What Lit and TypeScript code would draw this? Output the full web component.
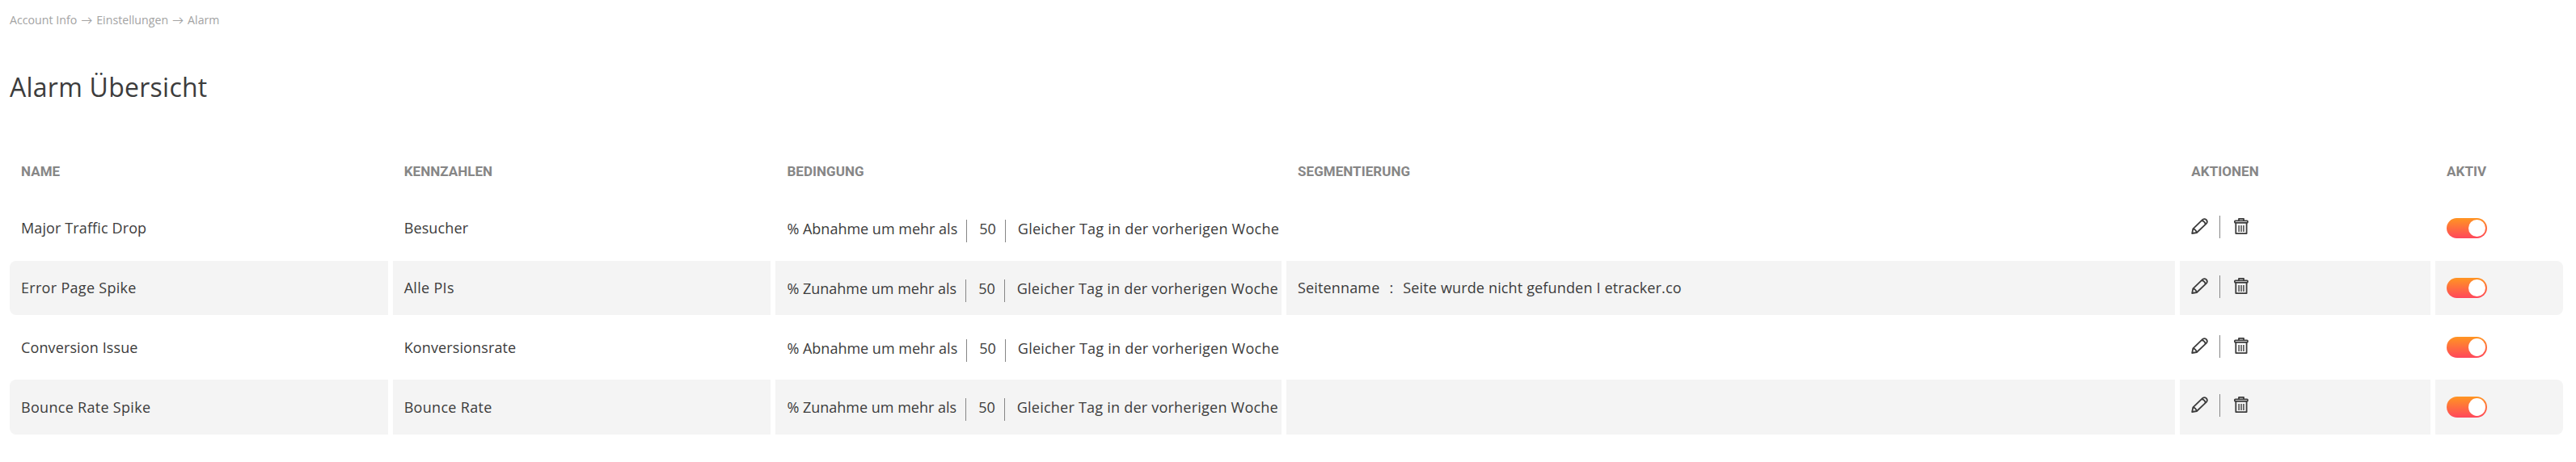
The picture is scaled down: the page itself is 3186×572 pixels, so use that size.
import { LitElement, html, svg, css } from 'lit';

interface Alarm {
  name: string;
  metric: string;
  condition: string;
  value: number;
  period: string;
  segment?: { name: string; value: string };
  active: boolean;
}

const ALARMS: Alarm[] = [
  {
    name: 'Major Traffic Drop',
    metric: 'Besucher',
    condition: '% Abnahme um mehr als',
    value: 50,
    period: 'Gleicher Tag in der vorherigen Woche',
    active: true,
  },
  {
    name: 'Error Page Spike',
    metric: 'Alle PIs',
    condition: '% Zunahme um mehr als',
    value: 50,
    period: 'Gleicher Tag in der vorherigen Woche',
    segment: { name: 'Seitenname', value: 'Seite wurde nicht gefunden I etracker.co' },
    active: true,
  },
  {
    name: 'Conversion Issue',
    metric: 'Konversionsrate',
    condition: '% Abnahme um mehr als',
    value: 50,
    period: 'Gleicher Tag in der vorherigen Woche',
    active: true,
  },
  {
    name: 'Bounce Rate Spike',
    metric: 'Bounce Rate',
    condition: '% Zunahme um mehr als',
    value: 50,
    period: 'Gleicher Tag in der vorherigen Woche',
    active: true,
  },
];

const pencilIcon = svg`
  <path d="M1.2 19 L2.3 13.4 L14.2 1.9 Q16.6 0.2 18.8 2.2 Q20.8 4.5 19 6.7 L7 18 Z" />
  <path d="M2.3 13.4 Q5.8 14 7 18 M13 3.2 Q16.8 3.8 17.8 7.8" />
`;

const trashIcon = svg`
  <path d="M6 3 V0.9 H12 V3" />
  <rect x="0.9" y="3.3" width="16" height="2.6" rx="0.8" />
  <path d="M2.3 6 V19.1 H15.6 V6" />
  <path class="thin" d="M6.1 9 V17 M9 9 V17 M11.9 9 V17" />
`;

class ToggleSwitch extends LitElement {
  static properties = {
    checked: { type: Boolean, reflect: true },
  };

  declare checked: boolean;

  static styles = css`
    :host {
      display: flex;
      align-items: center;
      box-sizing: border-box;
      width: 50px;
      height: 25.4px;
      padding: 0 2px;
      border-radius: 13px;
      background: #c8c8c8;
    }
    :host([checked]) {
      justify-content: flex-end;
      background: linear-gradient(#ff9522, #ff475b);
    }
    .knob {
      width: 21px;
      height: 21.4px;
      border-radius: 50%;
      background: #fff;
    }
  `;

  render() {
    return html`<span class="knob"></span>`;
  }
}

customElements.define('toggle-switch', ToggleSwitch);

class AppRoot extends LitElement {
  static styles = css`
    :host {
      display: block;
      box-sizing: border-box;
      min-height: 572px;
      padding: 15px 16px 0 12px;
      background: #fff;
      color: #3c3c3c;
      font-family: 'Open Sans', 'Liberation Sans', sans-serif;
      font-size: 18px;
    }
    .breadcrumb {
      display: flex;
      font-size: 14.2px;
      line-height: 20px;
      color: #a3a3a3;
    }
    .arrow {
      width: 24px;
      font-family: Lato, sans-serif;
      text-align: center;
    }
    h1 {
      margin: 53px 0 62px;
      font-size: 32px;
      font-weight: 400;
      line-height: 40px;
      letter-spacing: 0.25px;
    }
    .row {
      display: grid;
      grid-template-columns: 15fr 15fr 20fr 35fr 10fr 5fr;
      height: 67.4px;
      margin-bottom: 6.4px;
    }
    .row.head {
      height: 44px;
      margin-bottom: 14.8px;
      color: #868686;
      font-family: Roboto, 'Liberation Sans', sans-serif;
      font-size: 17px;
      font-weight: 700;
      letter-spacing: 0.05px;
      text-transform: uppercase;
    }
    .cell {
      display: flex;
      align-items: center;
      min-width: 0;
      padding-left: 14px;
      border-right: 6px solid #fff;
      white-space: nowrap;
    }
    .cell:last-child {
      border-right: 0;
    }
    .row.striped .cell {
      background: #f4f4f4;
    }
    .row.striped .cell:first-child {
      border-radius: 8px 0 0 8px;
    }
    .row.striped .cell:last-child {
      border-radius: 0 8px 8px 0;
    }
    .text {
      letter-spacing: 0.12px;
    }
    .row.striped .text {
      letter-spacing: 0.3px;
    }
    .condition {
      align-items: flex-start;
      padding-top: 23.3px;
      line-height: 22px;
    }
    .part {
      height: 28px;
      margin-right: 15px;
      padding-right: 11px;
      border-right: 1px solid #868686;
    }
    .period {
      letter-spacing: 0.23px;
    }
    .segment {
      letter-spacing: 0.15px;
    }
    .colon {
      margin: 0 12px;
    }
    .actions {
      align-items: flex-start;
      padding-top: 18.3px;
    }
    .actions svg {
      display: block;
      margin-top: 3px;
      overflow: visible;
      fill: none;
      stroke: #3c3c3c;
      stroke-width: 1.8;
      stroke-linejoin: round;
    }
    .actions .thin {
      stroke-width: 1.4;
    }
    .divider {
      width: 1px;
      height: 28px;
      margin: 0 17px 0 14px;
      background: #868686;
    }
  `;

  _renderRow(alarm: Alarm, index: number) {
    return html`
      <div class="row ${index % 2 ? 'striped' : ''}">
        <div class="cell text">${alarm.name}</div>
        <div class="cell text">${alarm.metric}</div>
        <div class="cell condition">
          <span class="part">${alarm.condition}</span>
          <span class="part">${alarm.value}</span>
          <span class="period">${alarm.period}</span>
        </div>
        <div class="cell segment">
          ${alarm.segment
            ? html`<span>${alarm.segment.name}</span><span class="colon">:</span><span>${alarm.segment.value}</span>`
            : ''}
        </div>
        <div class="cell actions">
          <svg width="21" height="20" viewBox="0 0 21 20">${pencilIcon}</svg>
          <span class="divider"></span>
          <svg width="18" height="20" viewBox="0 0 18 20">${trashIcon}</svg>
        </div>
        <div class="cell">
          <toggle-switch ?checked=${alarm.active}></toggle-switch>
        </div>
      </div>
    `;
  }

  render() {
    return html`
      <nav class="breadcrumb">
        <span>Account Info</span><span class="arrow">→</span><span>Einstellungen</span
        ><span class="arrow">→</span><span>Alarm</span>
      </nav>
      <h1>Alarm Übersicht</h1>
      <div class="row head">
        ${['Name', 'Kennzahlen', 'Bedingung', 'Segmentierung', 'Aktionen', 'Aktiv'].map(
          (title) => html`<div class="cell">${title}</div>`
        )}
      </div>
      ${ALARMS.map((alarm, index) => this._renderRow(alarm, index))}
    `;
  }
}

customElements.define('app-root', AppRoot);
